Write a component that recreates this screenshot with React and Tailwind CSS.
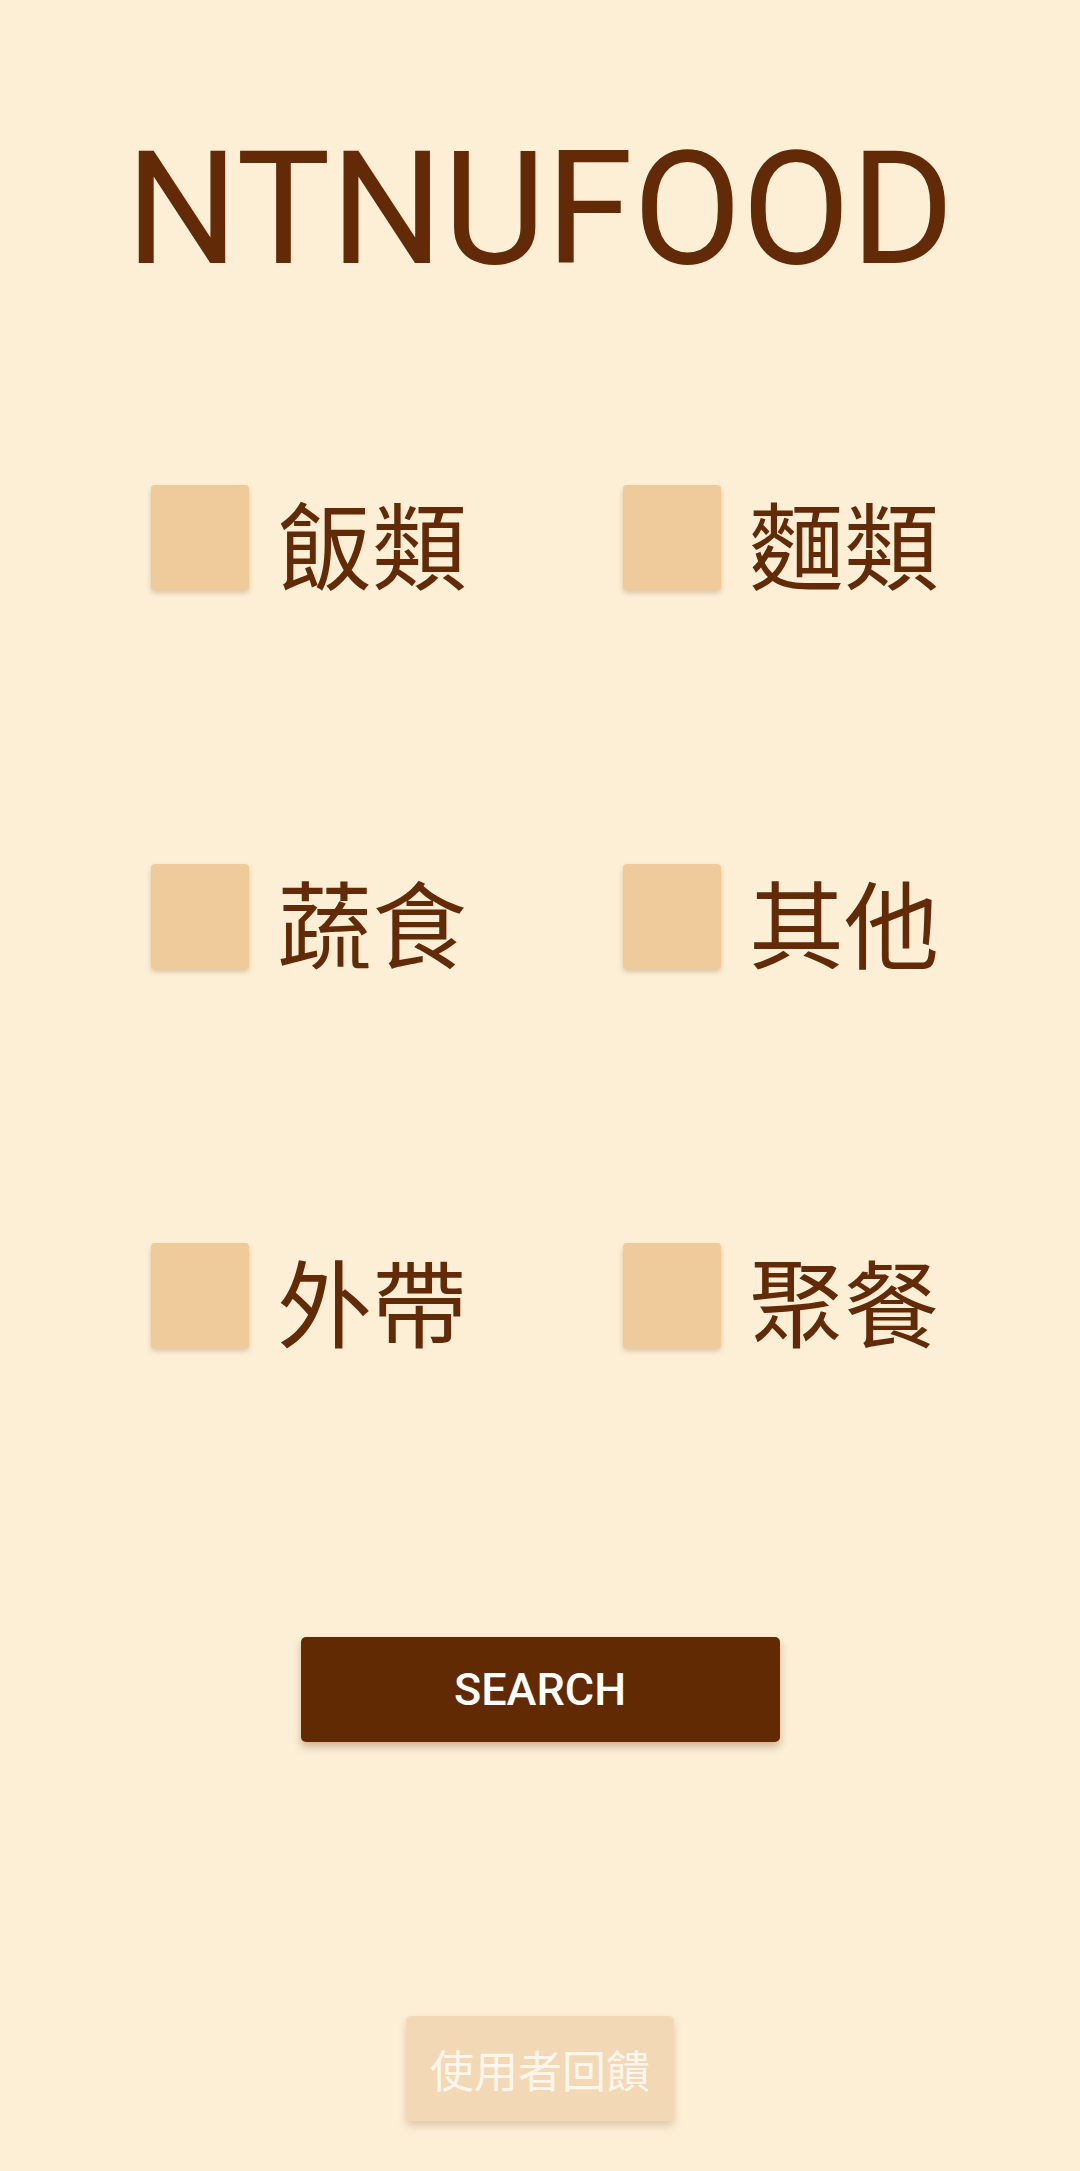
import React from "react";

const items = ["飯類", "麵類", "蔬食", "其他", "外帶", "聚餐"];

function Item({ label }) {
  return (
    <div className="flex items-center gap-[28px] h-[105px]">
      <div className="w-[98px] h-[105px] rounded-[4px] bg-[#efca9a] shadow-[0_3px_5px_rgba(120,70,20,0.25)]" />
      <span
        className="text-[95px] leading-none text-[#622a06] pt-[8px]"
        style={{ fontFamily: '"Noto Sans CJK TC", "Noto Sans CJK SC", sans-serif' }}
      >
        {label}
      </span>
    </div>
  );
}

export default function App() {
  return (
    <div className="w-[1080px] h-[2171px] bg-[#fdefd6] flex flex-col items-center overflow-hidden">
      <h1
        className="mt-[130px] text-[158px] leading-none text-[#622a06] font-normal"
        style={{ fontFamily: 'Roboto, "Liberation Sans", sans-serif' }}
      >
        NTNUFOOD
      </h1>
      <div className="self-start pl-[151px] mt-[197px] grid grid-cols-[472px_auto] gap-y-[274px]">
        {items.map((l) => (
          <Item key={l} label={l} />
        ))}
      </div>
      <button
        className="mt-[289px] w-[479px] h-[105px] rounded-[5px] bg-[#612a02] text-white text-[45px] font-medium shadow-[0_5px_8px_rgba(100,50,10,0.3)] flex items-center justify-center"
        style={{ fontFamily: 'Roboto, "Liberation Sans", sans-serif' }}
      >
        SEARCH
      </button>
      <button
        className="mt-[274px] w-[268px] h-[105px] rounded-[5px] bg-[#f3d8b6] text-[#fef6ea] text-[44px] shadow-[0_5px_8px_rgba(120,70,20,0.22)] flex items-center justify-center"
        style={{ fontFamily: '"Noto Sans CJK TC", "Noto Sans CJK SC", sans-serif' }}
      >
        使用者回饋
      </button>
    </div>
  );
}
